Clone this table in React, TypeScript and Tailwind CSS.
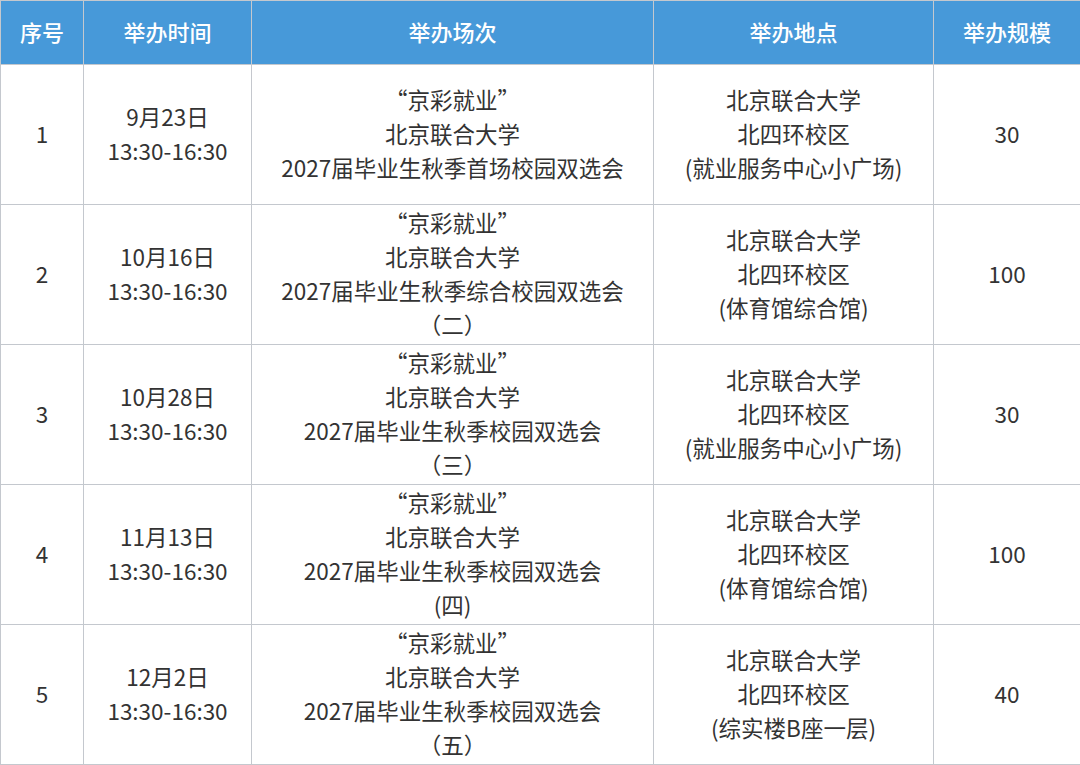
const rows = [
  {
    no: "1",
    date: "9月23日",
    time: "13:30-16:30",
    title: ["“京彩就业”", "北京联合大学", "2027届毕业生秋季首场校园双选会"],
    place: ["北京联合大学", "北四环校区", "(就业服务中心小广场)"],
    size: "30",
  },
  {
    no: "2",
    date: "10月16日",
    time: "13:30-16:30",
    title: ["“京彩就业”", "北京联合大学", "2027届毕业生秋季综合校园双选会", "（二）"],
    place: ["北京联合大学", "北四环校区", "(体育馆综合馆)"],
    size: "100",
  },
  {
    no: "3",
    date: "10月28日",
    time: "13:30-16:30",
    title: ["“京彩就业”", "北京联合大学", "2027届毕业生秋季校园双选会", "（三）"],
    place: ["北京联合大学", "北四环校区", "(就业服务中心小广场)"],
    size: "30",
  },
  {
    no: "4",
    date: "11月13日",
    time: "13:30-16:30",
    title: ["“京彩就业”", "北京联合大学", "2027届毕业生秋季校园双选会", "(四)"],
    place: ["北京联合大学", "北四环校区", "(体育馆综合馆)"],
    size: "100",
  },
  {
    no: "5",
    date: "12月2日",
    time: "13:30-16:30",
    title: ["“京彩就业”", "北京联合大学", "2027届毕业生秋季校园双选会", "（五）"],
    place: ["北京联合大学", "北四环校区", "(综实楼B座一层)"],
    size: "40",
  },
];

const headers = ["序号", "举办时间", "举办场次", "举办地点", "举办规模"];
const widths = ["w-[83px]", "w-[168px]", "w-[402px]", "w-[280px]", "w-[147px]"];

const Lines = ({ items }: { items: string[] }) => (
  <>
    {items.map((t, i) => (
      <div key={i}>{t}</div>
    ))}
  </>
);

export default function App() {
  return (
    <div className="w-[1080px] h-[765px] bg-white font-['Noto_Sans_CJK_SC','Noto_Sans',sans-serif]">
      <table className="w-[1080px] table-fixed border-collapse text-center">
        <thead>
          <tr className="h-[64px] bg-[#4799d9]">
            {headers.map((h, i) => (
              <th
                key={h}
                className={`${widths[i]} border border-[#c4c8ce] pb-[3px] text-[22px] font-medium text-white align-middle`}
              >
                {h}
              </th>
            ))}
          </tr>
        </thead>
        <tbody className="text-[22.5px] leading-[34px] text-[#333333]">
          {rows.map((r) => (
            <tr key={r.no} className="h-[140px]">
              <td className="border border-[#c4c8ce] pb-[3px] align-middle">{r.no}</td>
              <td className="border border-[#c4c8ce] pb-[3px] align-middle">
                <Lines items={[r.date, r.time]} />
              </td>
              <td className="border border-[#c4c8ce] pb-[3px] align-middle">
                <Lines items={r.title} />
              </td>
              <td className="border border-[#c4c8ce] pb-[3px] align-middle">
                <Lines items={r.place} />
              </td>
              <td className="border border-[#c4c8ce] pb-[3px] align-middle">{r.size}</td>
            </tr>
          ))}
        </tbody>
      </table>
    </div>
  );
}
